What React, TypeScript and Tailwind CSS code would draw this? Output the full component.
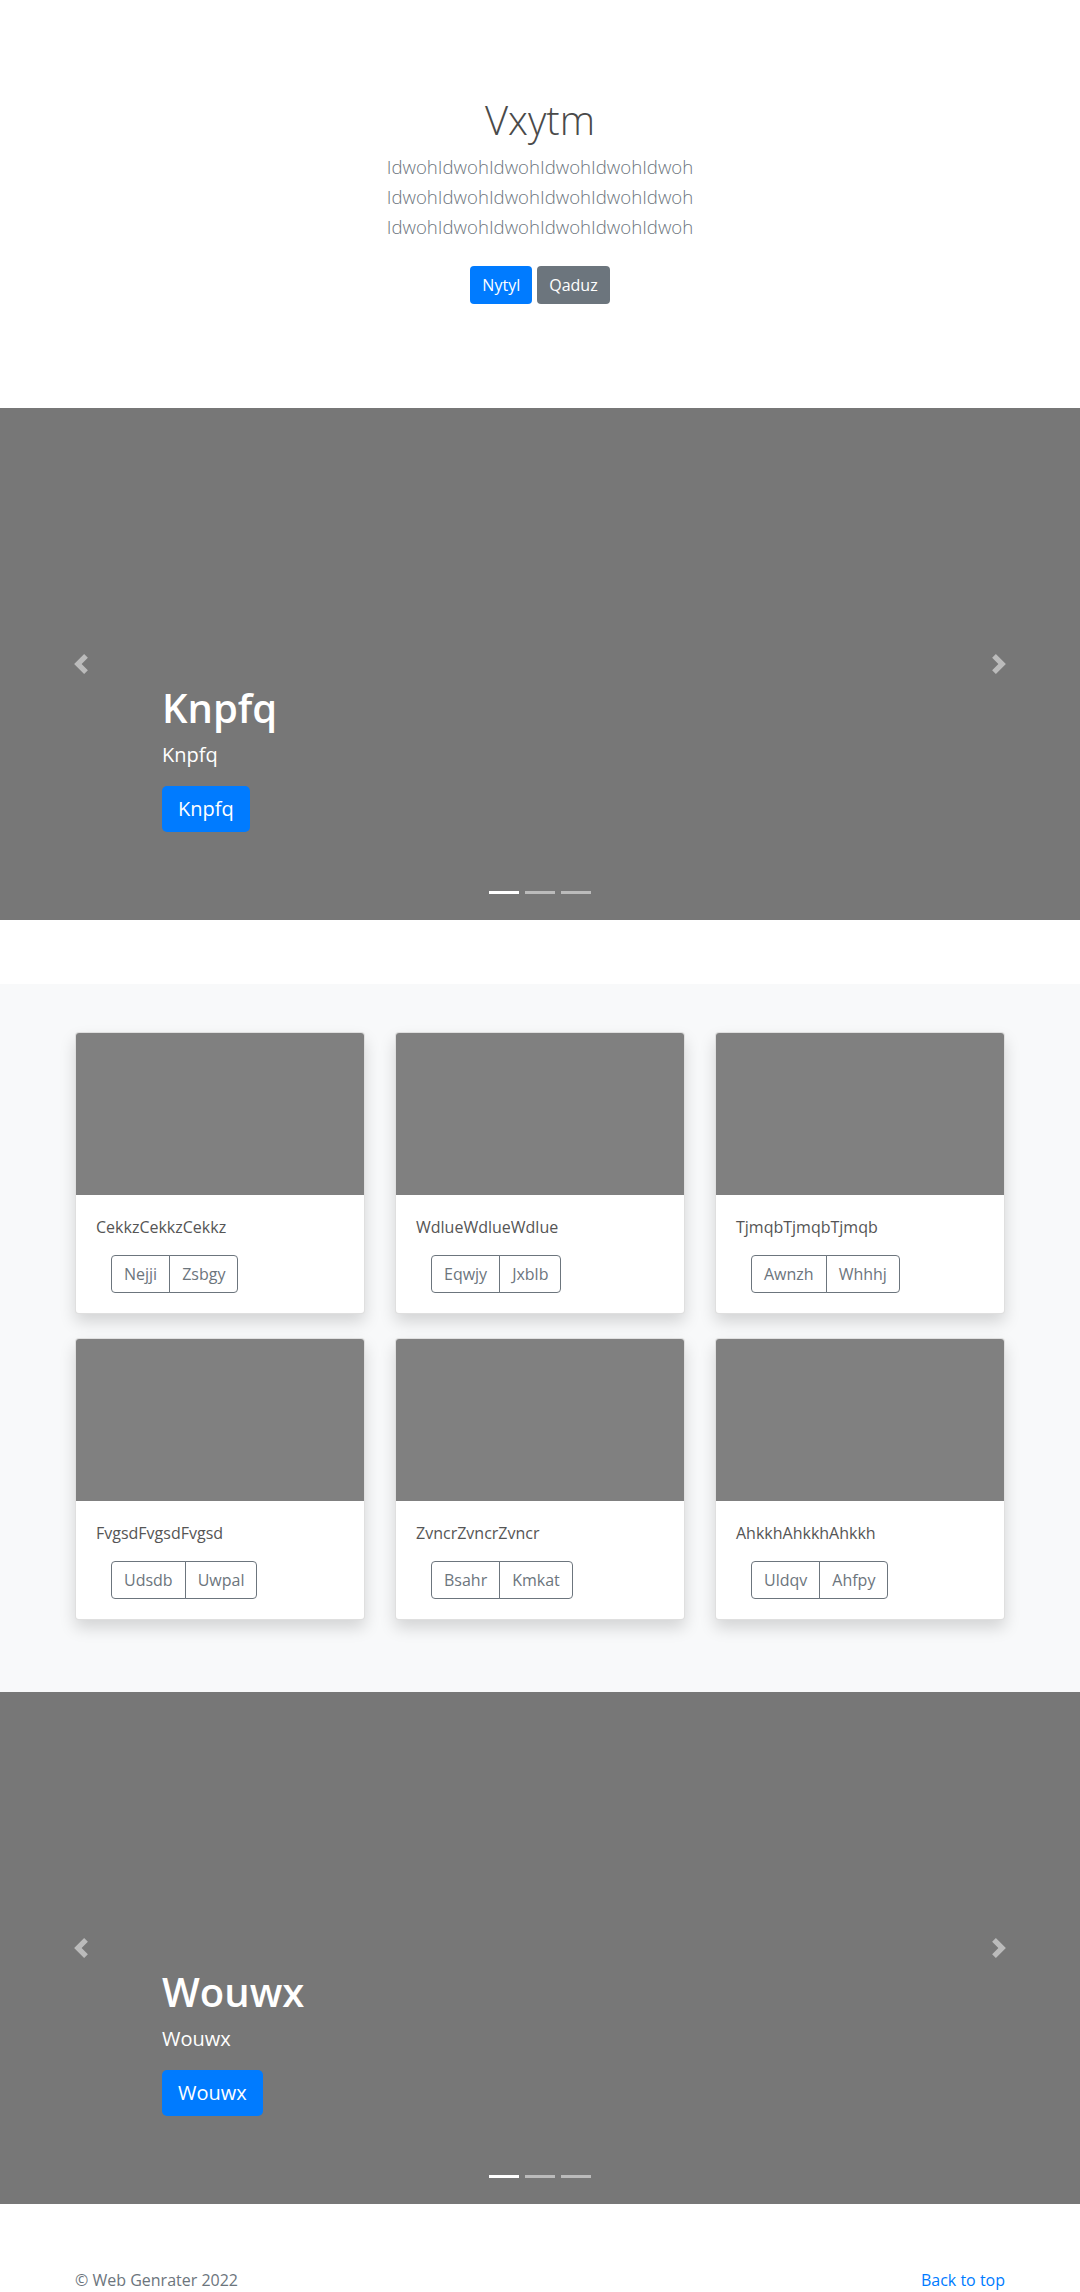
import React from "react";

const cards = [
  { text: "CekkzCekkzCekkz", a: "Nejji", b: "Zsbgy" },
  { text: "WdlueWdlueWdlue", a: "Eqwjy", b: "Jxblb" },
  { text: "TjmqbTjmqbTjmqb", a: "Awnzh", b: "Whhhj" },
  { text: "FvgsdFvgsdFvgsd", a: "Udsdb", b: "Uwpal" },
  { text: "ZvncrZvncrZvncr", a: "Bsahr", b: "Kmkat" },
  { text: "AhkkhAhkkhAhkkh", a: "Uldqv", b: "Ahfpy" },
];

function Chevron({ dir }: { dir: "prev" | "next" }) {
  return (
    <svg width="20" height="20" viewBox="0 0 8 8" className="opacity-50" fill="#fff">
      {dir === "prev" ? (
        <path d="M5.25 0l-4 4 4 4 1.5-1.5L4.25 4l2.5-2.5L5.25 0z" />
      ) : (
        <path d="M2.75 0l-1.5 1.5L3.75 4l-2.5 2.5L2.75 8l4-4-4-4z" />
      )}
    </svg>
  );
}

function Carousel({ title }: { title: string }) {
  return (
    <div className="relative h-[512px] bg-[#777777] overflow-hidden">
      <div className="absolute inset-y-0 left-0 w-[15%] flex items-center justify-center">
        <Chevron dir="prev" />
      </div>
      <div className="absolute inset-y-0 right-0 w-[15%] flex items-center justify-center">
        <Chevron dir="next" />
      </div>
      <div className="absolute left-[15%] right-[15%] bottom-[88px] text-left text-white">
        <h1 className="text-[40px] leading-[48px] font-semibold mb-2">{title}</h1>
        <p className="text-[20px] leading-[30px] mb-4">{title}</p>
        <a className="inline-block bg-[#007bff] text-white text-[20px] leading-[30px] px-4 py-2 rounded-[5px]">
          {title}
        </a>
      </div>
      <div className="absolute left-0 right-0 bottom-[26px] flex justify-center gap-[6px]">
        <span className="block w-[30px] h-[3px] bg-white" />
        <span className="block w-[30px] h-[3px] bg-white/50" />
        <span className="block w-[30px] h-[3px] bg-white/50" />
      </div>
    </div>
  );
}

export default function App() {
  return (
    <div className="font-['Open_Sans',sans-serif] bg-white">
      <section className="pt-[96px] pb-[96px] text-center">
        <div className="mx-auto max-w-[960px] px-[15px]">
          <h1 className="text-[40px] leading-[48px] font-light text-[#4a4a4a] mb-2">Vxytm</h1>
          <div className="text-[18.6px] leading-[30px] font-light text-[#6c757d]">
            <div>IdwohIdwohIdwohIdwohIdwohIdwoh</div>
            <div>IdwohIdwohIdwohIdwohIdwohIdwoh</div>
            <div>IdwohIdwohIdwohIdwohIdwohIdwoh</div>
          </div>
          <div className="flex justify-center gap-[5px] mt-6 mb-2">
            <a className="inline-block bg-[#007bff] text-white text-base leading-6 px-3 py-[7px] rounded">Nytyl</a>
            <a className="inline-block bg-[#6c757d] text-white text-base leading-6 px-3 py-[7px] rounded">Qaduz</a>
          </div>
        </div>
      </section>

      <Carousel title="Knpfq" />

      <section className="mt-16 bg-[#f8f9fa] pt-12 pb-[72px]">
        <div className="mx-auto w-[930px] grid grid-cols-3 gap-x-[30px] gap-y-6">
          {cards.map((c) => (
            <div
              key={c.text}
              className="bg-white border border-black/[0.125] rounded overflow-hidden shadow-[0_8px_16px_rgba(0,0,0,0.15)]"
            >
              <div className="h-[162px] bg-[#808080]" />
              <div className="p-5">
                <p className="text-base leading-6 text-[#555] mb-4">{c.text}</p>
                <div className="ml-[15px] inline-flex">
                  <span className="px-3 py-[6px] text-base leading-6 text-[#6c757d] border border-[#6c757d] rounded-l">
                    {c.a}
                  </span>
                  <span className="-ml-px px-3 py-[6px] text-base leading-6 text-[#6c757d] border border-[#6c757d] rounded-r">
                    {c.b}
                  </span>
                </div>
              </div>
            </div>
          ))}
        </div>
      </section>

      <Carousel title="Wouwx" />

      <footer className="pt-[64px] pb-12">
        <div className="mx-auto max-w-[960px] px-[15px] flex justify-between text-base leading-6 text-[#6c757d]">
          <p>© Web Genrater 2022</p>
          <a className="text-[#007bff]">Back to top</a>
        </div>
      </footer>
    </div>
  );
}
